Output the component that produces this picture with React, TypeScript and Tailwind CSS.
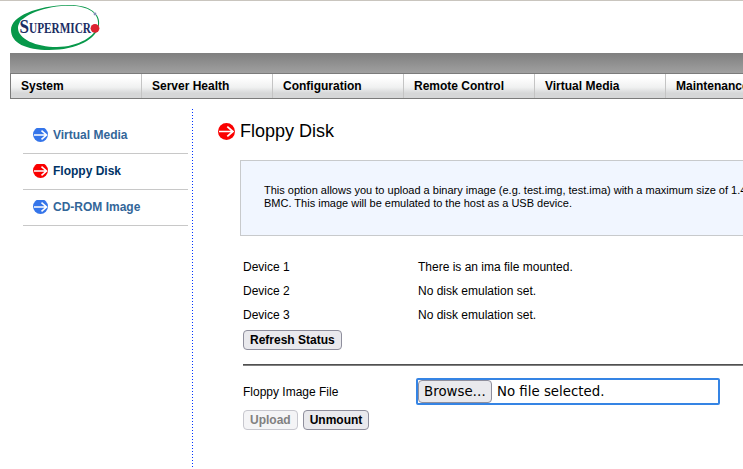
import type { ReactNode } from "react";

function ArrowBadge({ color, size }: { color: string; size: number }) {
  return (
    <svg width={size} height={size} viewBox="0 0 17 17" className="shrink-0">
      <circle cx="8.500" cy="8.500" r="8.500" fill={color} />
      <path d="M1 8.500H15M9.300 3.600L15 8.500L9.300 13.400" fill="none" stroke="#fff" strokeWidth="1.700" />
    </svg>
  );
}

function SmallArrowBadge({ color }: { color: string }) {
  return (
    <svg width="15" height="14" viewBox="0 0 15 14" className="shrink-0">
      <circle cx="7.500" cy="6.500" r="7.500" fill={color} />
      <path d="M1 7H13.500M8.500 2.700L13.500 7L8.500 11.300" fill="none" stroke="#fff" strokeWidth="1.600" />
    </svg>
  );
}

function Logo() {
  return (
    <svg width="92" height="46" viewBox="10 4 92 46" className="block">
      <path
        fillRule="evenodd"
        fill="#07984a"
        d="M67 5C88 4 101 13 99 25C97 39 77 50 49 50C26 50 11 43 11 30C11 16 37 6 67 5ZM66 5.800C40 7 18 17 18 28C18 39 36 47 57 47C78 47 96 36 98 25C99.500 13 88 5 66 5.800Z"
      />
      <g fontFamily="Liberation Serif, serif" fontWeight="700" fill="#1b2d63" stroke="#fff" strokeWidth="1.500" paintOrder="stroke">
        <text x="19.500" y="33" fontSize="18" textLength="9.500" lengthAdjust="spacingAndGlyphs">S</text>
        <text x="29" y="33" fontSize="15" textLength="62" lengthAdjust="spacingAndGlyphs">UPERMICR</text>
      </g>
      <circle cx="95" cy="28.300" r="4.400" fill="#dc2430" />
      <circle cx="95" cy="14" r="1.800" fill="#fff" />
      <circle cx="95" cy="14" r="1.400" fill="#8290b8" />
    </svg>
  );
}

const menu = ["System", "Server Health", "Configuration", "Remote Control", "Virtual Media", "Maintenance"];
const links = ["Virtual Media", "Floppy Disk", "CD-ROM Image"];
const devices = [
  ["Device 1", "There is an ima file mounted."],
  ["Device 2", "No disk emulation set."],
  ["Device 3", "No disk emulation set."],
];

function Button({ children, disabled }: { children: ReactNode; disabled?: boolean }) {
  return (
    <button
      disabled={disabled}
      className="h-5 rounded-[4px] border border-[#8f8f9d] bg-[#e9e9ed] px-1.5 text-[12px] leading-[18px] font-bold whitespace-nowrap text-black disabled:border-[#c7c7ce] disabled:bg-[#f4f4f6] disabled:text-[#808080]"
    >
      {children}
    </button>
  );
}

export default function App() {
  return (
    <div className="h-[469px] w-[743px] overflow-hidden border-t border-[#c9c5be] bg-white font-['Liberation_Sans',Arial,sans-serif] text-[12px] text-black">
      <header className="pl-[10px]">
        <div className="h-[52px] pt-[3px]">
          <Logo />
        </div>
        <div className="h-5 bg-linear-to-b from-[#7f7f7f] to-[#a0a0a0]" />
        <nav className="flex h-[26px] w-[800px] border border-[#7b7b7b] bg-[linear-gradient(to_bottom,#ffffff_15%,#f0f1f1_55%,#d6d7d8_80%,#d6d7d8_100%)]">
          {menu.map((item) => (
            <a key={item} className="w-[131px] shrink-0 border-r border-[#c4c4c4] pl-[10px] leading-[24px] font-bold">
              {item}
            </a>
          ))}
        </nav>
      </header>

      <div className="flex pt-[10px]">
        <aside className="h-[359px] w-[193px] shrink-0 pt-[9px] pl-[23px]">
          {links.map((item, i) => (
            <a
              key={item}
              className={`flex h-9 w-[165px] items-center gap-[5px] border-b border-[#c8c8c8] pb-[2px] pl-[10px] font-bold ${i === 1 ? "text-[#003366]" : "text-[#336699]"}`}
            >
              <SmallArrowBadge color={i === 1 ? "#fa0000" : "#3575ea"} />
              {item}
            </a>
          ))}
        </aside>
        <div className="-ml-px h-[358px] w-px shrink-0 bg-[repeating-linear-gradient(to_bottom,#0033ff_0_1px,transparent_1px_3px)]" />

        <main className="w-[600px] shrink-0 pt-3 pl-[25px]">
          <h1 className="flex h-5 items-center gap-[5px] text-[18px] leading-5">
            <ArrowBadge size={17} color="#fa0000" />
            Floppy Disk
          </h1>
          <p className="mt-[19px] ml-[22px] h-[76px] w-[620px] border border-[#c8cacc] bg-[#f1f6ff] pt-[23px] pl-[23px] text-[11px] leading-[13px]">
            This option allows you to upload a binary image (e.g. test.img, test.ima) with a maximum size of 1.44MB
            <br />
            BMC. This image will be emulated to the host as a USB device.
          </p>
          <div className="mt-[19px] ml-[25px]">
            {devices.map(([name, status]) => (
              <div key={name} className="flex h-6 items-center">
                <span className="w-[175px]">{name}</span>
                <span>{status}</span>
              </div>
            ))}
            <div className="mt-[3px] flex">
              <Button>Refresh Status</Button>
            </div>
            <hr className="mt-[14px] w-[520px] border-t border-b border-t-[#505050] border-b-[#808080]" />
            <div className="mt-3 flex h-[27px] items-center">
              <span className="w-[173px]">Floppy Image File</span>
              <div className="flex h-[27px] w-[304px] items-center rounded-[2px] border-2 border-[#3584e4] font-['DejaVu_Sans',sans-serif] text-[13.333px]">
                <button className="h-[23px] w-[74px] rounded-[4px] border border-[#8f8f9d] bg-[#e9e9ed] leading-[21px] whitespace-nowrap">Browse…</button>
                <span className="ml-[5px]">No file selected.</span>
              </div>
            </div>
            <div className="mt-[5px] flex gap-[5px]">
              <Button disabled>Upload</Button>
              <Button>Unmount</Button>
            </div>
          </div>
        </main>
      </div>
    </div>
  );
}
